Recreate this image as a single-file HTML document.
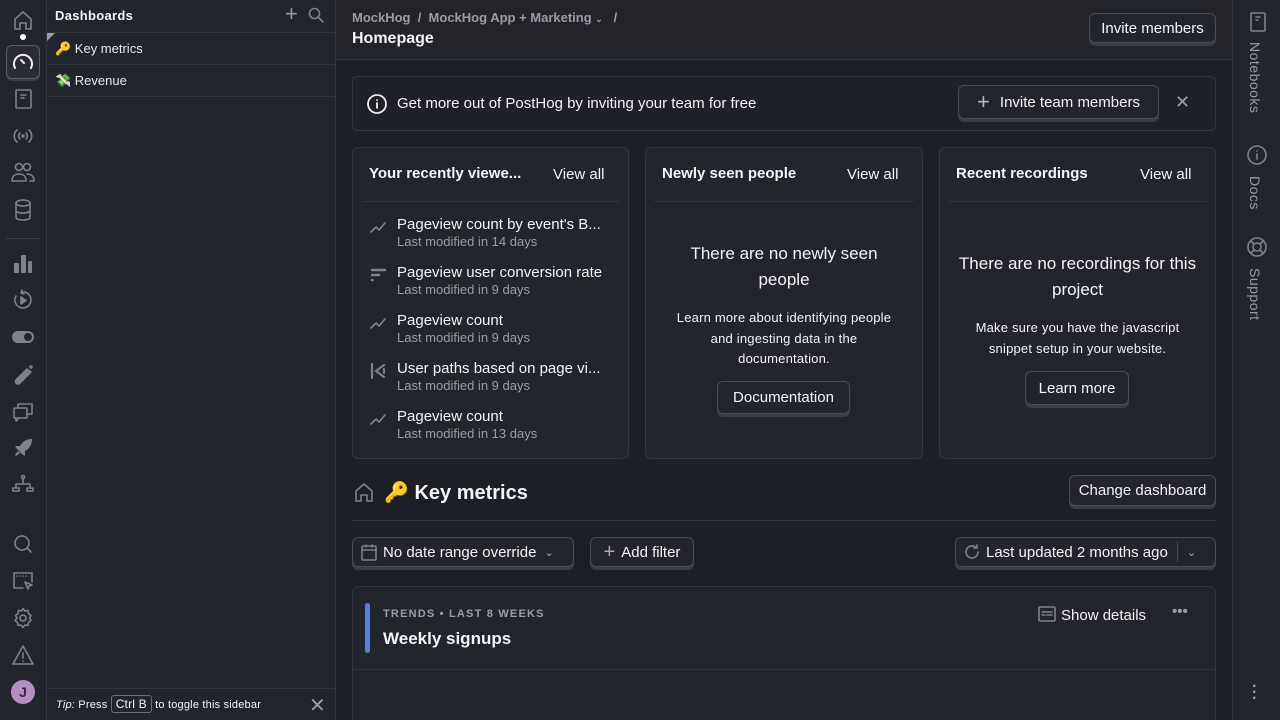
<!DOCTYPE html>
<html><head><meta charset="utf-8"><style>
*{box-sizing:border-box;margin:0;padding:0}
html{overflow:hidden;width:1280px;height:720px}
body{width:1280px;height:720px;overflow:hidden;background:#1d1f27;font-family:"Liberation Sans",sans-serif;color:#f3f4f6;position:relative}
.a{position:absolute}
.nav{left:0;top:0;width:47px;height:720px;background:#23252c;border-right:1px solid #34363e}
.side{left:47px;top:0;width:289px;height:720px;background:#23252c;border-right:1px solid #34363e}
.rb{left:1232px;top:0;width:48px;height:720px;background:#23252c;border-left:1px solid #34363e}
.btn{position:absolute;border:1px solid #4a4c54;border-radius:6px;background:#23252c;box-shadow:0 3px 0 #3a3c44;font-size:15px;color:#f3f4f6;display:flex;align-items:center;justify-content:center}
.card{position:absolute;background:#23252c;border:1px solid #34363e;border-radius:6px}
.muted{color:#9a9ca3}
svg{position:absolute;fill:none;stroke:#7f8189;stroke-width:1.6;stroke-linecap:round;stroke-linejoin:round}
.it{position:absolute;left:44px;font-size:15px}
.it small{display:block;font-size:13px;color:#9a9ca3;margin-top:1px}
</style></head><body>
<div class="a nav">
<svg style="left:12px;top:9px" width="22" height="22" viewBox="0 0 22 22"><path d="M3 10L11 3l8 7v10h-5v-6H8v6H3z"/></svg>
<div class="a" style="left:20px;top:34px;width:6px;height:6px;border-radius:3px;background:#fff"></div>
<div class="a" style="left:6px;top:45px;width:34px;height:34px;border:1px solid #5a5c64;border-radius:6px;box-shadow:0 2px 0 #3a3c44;background:#2a2c34"></div>
<svg style="left:12px;top:51px;stroke:#eee;stroke-width:2" width="22" height="22" viewBox="0 0 22 22"><path d="M3 17a9 9 0 1 1 16 0"/><path d="M9 9l3 3"/></svg>
<svg style="left:12px;top:88px" width="22" height="22" viewBox="0 0 22 22"><rect x="4" y="2" width="15" height="18" rx="1"/><path d="M9 7h5M9 10h3"/></svg>
<svg style="left:12px;top:125px" width="22" height="22" viewBox="0 0 22 22"><path d="M5 5a8 8 0 0 0 0 12M17 5a8 8 0 0 1 0 12M8 8a4 4 0 0 0 0 6M14 8a4 4 0 0 1 0 6"/><circle cx="11" cy="11" r="1"/></svg>
<svg style="left:11px;top:161px" width="24" height="22" viewBox="0 0 24 22"><circle cx="8" cy="6" r="3.5"/><circle cx="16" cy="6" r="3.5"/><path d="M1 20c0-5 3-7 7-7s7 2 7 7H1zM16 13c4 0 7 2 7 7h-4"/></svg>
<svg style="left:13px;top:199px" width="20" height="22" viewBox="0 0 20 22"><ellipse cx="10" cy="4" rx="7" ry="3"/><path d="M3 4v14c0 2 3 3 7 3s7-1 7-3V4M3 11c0 2 3 3 7 3s7-1 7-3"/></svg>
<div class="a" style="left:6px;top:238px;width:34px;height:1px;background:#3a3c44"></div>
<svg style="left:12px;top:253px;fill:#7f8189;stroke:none" width="22" height="22" viewBox="0 0 22 22"><rect x="2" y="10" width="5" height="10" rx="1"/><rect x="9" y="2" width="5" height="18" rx="1"/><rect x="16" y="8" width="4" height="12" rx="1"/></svg>
<svg style="left:12px;top:289px" width="22" height="22" viewBox="0 0 22 22"><path d="M4 7a8 8 0 1 0 6-4"/><path d="M10 1l-1 3 3 1"/><path d="M9 8v7l5-3.5z" fill="#7f8189"/></svg>
<div class="a" style="left:12px;top:331px;width:22px;height:12px;border-radius:6px;background:#7f8189"></div>
<div class="a" style="left:24px;top:333px;width:8px;height:8px;border-radius:4px;background:#23252c"></div>
<svg style="left:12px;top:364px" width="22" height="22" viewBox="0 0 22 22"><path d="M15 5L4 16a2.5 2.5 0 0 0 4 3l11-11z" fill="#7f8189"/><circle cx="19" cy="3" r="1"/></svg>
<svg style="left:12px;top:401px" width="22" height="22" viewBox="0 0 22 22"><rect x="2" y="7" width="13" height="10" rx="1"/><path d="M6 7V3h14v10h-5"/><path d="M4 17v3l3-3"/></svg>
<svg style="left:12px;top:437px;fill:#7f8189;stroke:none" width="22" height="22" viewBox="0 0 22 22"><path d="M20 2c-6 0-10 3-12 7H3l2 3 5 5 3 2v-5c4-2 7-6 7-12zM6 14l-3 4 1 1 4-3z"/></svg>
<svg style="left:12px;top:474px" width="22" height="22" viewBox="0 0 22 22"><circle cx="11" cy="3" r="1.5"/><path d="M11 5v5M4 13v-3h14v3"/><rect x="1" y="14" width="6" height="3"/><rect x="15" y="14" width="6" height="3"/></svg>
<svg style="left:12px;top:533px" width="22" height="22" viewBox="0 0 22 22"><circle cx="10" cy="10" r="7"/><path d="M15 15l4 4"/></svg>
<svg style="left:12px;top:570px" width="22" height="22" viewBox="0 0 22 22"><path d="M11 18H2V3h18v9"/><path d="M5 6h.1M8 6h.1M11 6h.1M14 6h.1"/><path d="M13 12l7 3-3 1-1 3z"/></svg>
<svg style="left:12px;top:607px" width="22" height="22" viewBox="0 0 22 22"><circle cx="11" cy="11" r="3"/><path d="M11 1.5l2 2.5 3-.5.5 3 2.5 2-1.5 2.5 1.5 2.5-2.5 2-.5 3-3-.5-2 2.5-2-2.5-3 .5-.5-3-2.5-2L5 11 3.5 8.5l2.5-2 .5-3 3 .5z"/></svg>
<svg style="left:12px;top:644px" width="22" height="22" viewBox="0 0 22 22"><path d="M11 2L1 20h20z"/><path d="M11 9v5M11 17v.1"/></svg>
<div class="a" style="left:11px;top:680px;width:24px;height:24px;border-radius:12px;background:#b48fc0;color:#3c2247;font-size:14px;font-weight:bold;text-align:center;line-height:24px">J</div>
</div>

<div class="a side">
<div class="a" style="left:8px;top:8px;font-size:13px;font-weight:bold;letter-spacing:.3px">Dashboards</div>
<div class="a" style="left:238px;top:3px;font-size:22px;color:#9a9ca3;line-height:22px">+</div>
<svg style="left:261px;top:7px" width="16" height="16" viewBox="0 0 16 16"><circle cx="6.5" cy="6.5" r="5"/><path d="M10 10l5 5"/></svg>
<div class="a" style="left:0;top:32px;width:288px;height:1px;background:#34363e"></div>
<div class="a" style="left:0;top:33px;width:0;height:0;border-top:8px solid #9a9ca3;border-right:8px solid transparent"></div>
<div class="a" style="left:8px;top:41px;font-size:13px;color:#e6e7ea">🔑 Key metrics</div>
<div class="a" style="left:0;top:64px;width:288px;height:1px;background:#34363e"></div>
<div class="a" style="left:8px;top:73px;font-size:13px;color:#e6e7ea">💸 Revenue</div>
<div class="a" style="left:0;top:96px;width:288px;height:1px;background:#34363e"></div>
<div class="a" style="left:0;top:688px;width:288px;height:1px;background:#34363e"></div>
<div class="a" style="left:9px;top:697px;font-size:11px;letter-spacing:.2px"><i>Tip:</i> Press <span style="border:1px solid #6a6c74;border-radius:3px;padding:1px 4px;font-size:12px">Ctrl B</span> to toggle this sidebar</div>
<div class="a" style="left:262px;top:693px;font-size:20px;color:#9a9ca3">✕</div>
</div>

<div class="a" style="left:336px;top:0;width:896px;height:60px;background:#23242a;border-bottom:1px solid #34363e"></div>
<div class="a muted" style="left:352px;top:10px;font-size:13px;font-weight:bold">MockHog &nbsp;/&nbsp; MockHog App + Marketing <span style="font-size:9px">⌄</span> &nbsp; /</div>
<div class="a" style="left:352px;top:30px;font-size:16px;font-weight:bold">Homepage</div>
<div class="btn" style="left:1089px;top:13px;width:127px;height:30px">Invite members</div>

<div class="card" style="left:352px;top:76px;width:864px;height:55px;background:#1f2128"></div>
<svg style="left:366px;top:93px;stroke:#eee;stroke-width:1.8" width="22" height="22" viewBox="0 0 22 22"><circle cx="11" cy="11" r="9"/><path d="M11 10v5M11 7v.1"/></svg>
<div class="a" style="left:397px;top:95px;font-size:15px">Get more out of PostHog by inviting your team for free</div>
<div class="btn" style="left:958px;top:85px;width:201px;height:34px"><span style="font-size:22px;color:#bbb;margin-right:10px;font-weight:300">+</span>Invite team members</div>
<div class="a muted" style="left:1175px;top:92px;font-size:18px">✕</div>

<div class="card" style="left:352px;top:147px;width:277px;height:312px"></div>
<div class="a" style="left:369px;top:165px;font-size:15px;font-weight:bold">Your recently viewe...</div>
<div class="a" style="left:553px;top:166px;font-size:15px">View all</div>
<div class="a" style="left:362px;top:201px;width:258px;height:1px;background:#34363e"></div>
<div class="a" style="left:353px;top:216px;width:275px">
<svg style="left:17px;top:5px" width="16" height="12" viewBox="0 0 16 12"><path d="M1 11l5-5 3 3 6-7"/></svg>
<div class="it" style="top:0">Pageview count by event's B...<small>Last modified in 14 days</small></div>
<svg style="left:17px;top:52px;stroke-width:2.5" width="16" height="14" viewBox="0 0 16 14"><path d="M2 2h13M2 7h7M2 12h.5"/></svg>
<div class="it" style="top:48px">Pageview user conversion rate<small>Last modified in 9 days</small></div>
<svg style="left:17px;top:101px" width="16" height="12" viewBox="0 0 16 12"><path d="M1 11l5-5 3 3 6-7"/></svg>
<div class="it" style="top:96px">Pageview count<small>Last modified in 9 days</small></div>
<svg style="left:17px;top:147px;stroke-width:2.2" width="16" height="16" viewBox="0 0 16 16"><path d="M2 1v14M6 8l8-6M6 8l8 6M14 6v4"/></svg>
<div class="it" style="top:144px">User paths based on page vi...<small>Last modified in 9 days</small></div>
<svg style="left:17px;top:197px" width="16" height="12" viewBox="0 0 16 12"><path d="M1 11l5-5 3 3 6-7"/></svg>
<div class="it" style="top:192px">Pageview count<small>Last modified in 13 days</small></div>
</div>

<div class="card" style="left:645px;top:147px;width:278px;height:312px"></div>
<div class="a" style="left:662px;top:165px;font-size:15px;font-weight:bold">Newly seen people</div>
<div class="a" style="left:847px;top:166px;font-size:15px">View all</div>
<div class="a" style="left:654px;top:201px;width:260px;height:1px;background:#34363e"></div>
<div class="a" style="left:684px;top:241px;width:200px;text-align:center;font-size:17px;line-height:26px">There are no newly seen people</div>
<div class="a" style="left:676px;top:308px;width:216px;text-align:center;font-size:13px;line-height:20.5px;letter-spacing:.2px">Learn more about identifying people and ingesting data in the documentation.</div>
<div class="btn" style="left:717px;top:381px;width:133px;height:33px">Documentation</div>

<div class="card" style="left:939px;top:147px;width:277px;height:312px"></div>
<div class="a" style="left:956px;top:165px;font-size:15px;font-weight:bold">Recent recordings</div>
<div class="a" style="left:1140px;top:166px;font-size:15px">View all</div>
<div class="a" style="left:948px;top:201px;width:259px;height:1px;background:#34363e"></div>
<div class="a" style="left:954px;top:251px;width:247px;text-align:center;font-size:17px;line-height:26px">There are no recordings for this project</div>
<div class="a" style="left:954px;top:318px;width:247px;text-align:center;font-size:13px;line-height:20.5px;letter-spacing:.2px">Make sure you have the javascript snippet setup in your website.</div>
<div class="btn" style="left:1025px;top:371px;width:104px;height:34px">Learn more</div>

<svg style="left:353px;top:481px" width="22" height="22" viewBox="0 0 22 22"><path d="M3 10L11 3l8 7v10h-5v-6H8v6H3z"/></svg>
<div class="a" style="left:384px;top:480px;font-size:20px;font-weight:bold">🔑 Key metrics</div>
<div class="btn" style="left:1069px;top:475px;width:147px;height:31px">Change dashboard</div>
<div class="a" style="left:352px;top:520px;width:864px;height:1px;background:#34363e"></div>
<div class="btn" style="left:352px;top:537px;width:222px;height:30px;justify-content:flex-start;padding-left:8px">
<svg style="position:static;margin-right:6px" width="16" height="17" viewBox="0 0 16 17"><rect x="1" y="2" width="14" height="14" rx="1"/><path d="M1 6h14M5 1v2M11 1v2"/></svg>No date range override <span style="font-size:11px;color:#aaa;margin-left:8px">⌄</span></div>
<div class="btn" style="left:590px;top:537px;width:104px;height:30px"><span style="font-size:20px;color:#aaa;margin-right:6px;font-weight:300">+</span>Add filter</div>
<div class="btn" style="left:955px;top:537px;width:261px;height:30px;justify-content:flex-start;padding-left:8px">
<svg style="position:static;margin-right:6px" width="16" height="16" viewBox="0 0 16 16"><path d="M14 8a6 6 0 1 1-2-4.5"/><path d="M13 1v3h-3"/></svg>Last updated 2 months ago<span style="display:inline-block;width:1px;height:20px;background:#4a4c54;margin:0 9px"></span><span style="font-size:11px;color:#aaa">⌄</span></div>

<div class="card" style="left:352px;top:586px;width:864px;height:134px;border-bottom:none;border-radius:6px 6px 0 0"></div>
<div class="a" style="left:365px;top:603px;width:5px;height:50px;border-radius:3px;background:#5a7fd6"></div>
<div class="a muted" style="left:383px;top:608px;font-size:11px;font-weight:bold;letter-spacing:1.2px">TRENDS • LAST 8 WEEKS</div>
<div class="a" style="left:383px;top:629px;font-size:17px;font-weight:bold">Weekly signups</div>
<svg style="left:1038px;top:606px" width="18" height="16" viewBox="0 0 18 16"><rect x="1" y="1" width="16" height="14" rx="1"/><path d="M4 6h10M4 9h3M9 9h5"/></svg>
<div class="a" style="left:1061px;top:607px;font-size:15px">Show details</div>
<div class="a muted" style="left:1172px;top:603px;font-size:15px;font-weight:bold">•••</div>
<div class="a" style="left:353px;top:669px;width:862px;height:1px;background:#34363e"></div>

<div class="a rb">
<svg style="left:15px;top:12px" width="20" height="20" viewBox="0 0 20 20"><rect x="3" y="1" width="14" height="18" rx="1"/><path d="M8 5h4M8 8h2"/></svg>
<div class="a muted" style="left:14px;top:42px;writing-mode:vertical-rl;font-size:14px;letter-spacing:.5px">Notebooks</div>
<svg style="left:14px;top:145px" width="20" height="20" viewBox="0 0 20 20"><circle cx="10" cy="10" r="9"/><path d="M10 9v5M10 6v.1"/></svg>
<div class="a muted" style="left:14px;top:176px;writing-mode:vertical-rl;font-size:14px;letter-spacing:.5px">Docs</div>
<svg style="left:14px;top:237px" width="20" height="20" viewBox="0 0 20 20"><circle cx="10" cy="10" r="9"/><circle cx="10" cy="10" r="4"/><path d="M4 4l3 3M16 4l-3 3M4 16l3-3M16 16l-3-3"/></svg>
<div class="a muted" style="left:14px;top:268px;writing-mode:vertical-rl;font-size:14px;letter-spacing:.5px">Support</div>
<div class="a muted" style="left:19px;top:684px;font-size:16px;line-height:6px;font-weight:bold">·<br>·<br>·</div>
</div>
</body></html>
